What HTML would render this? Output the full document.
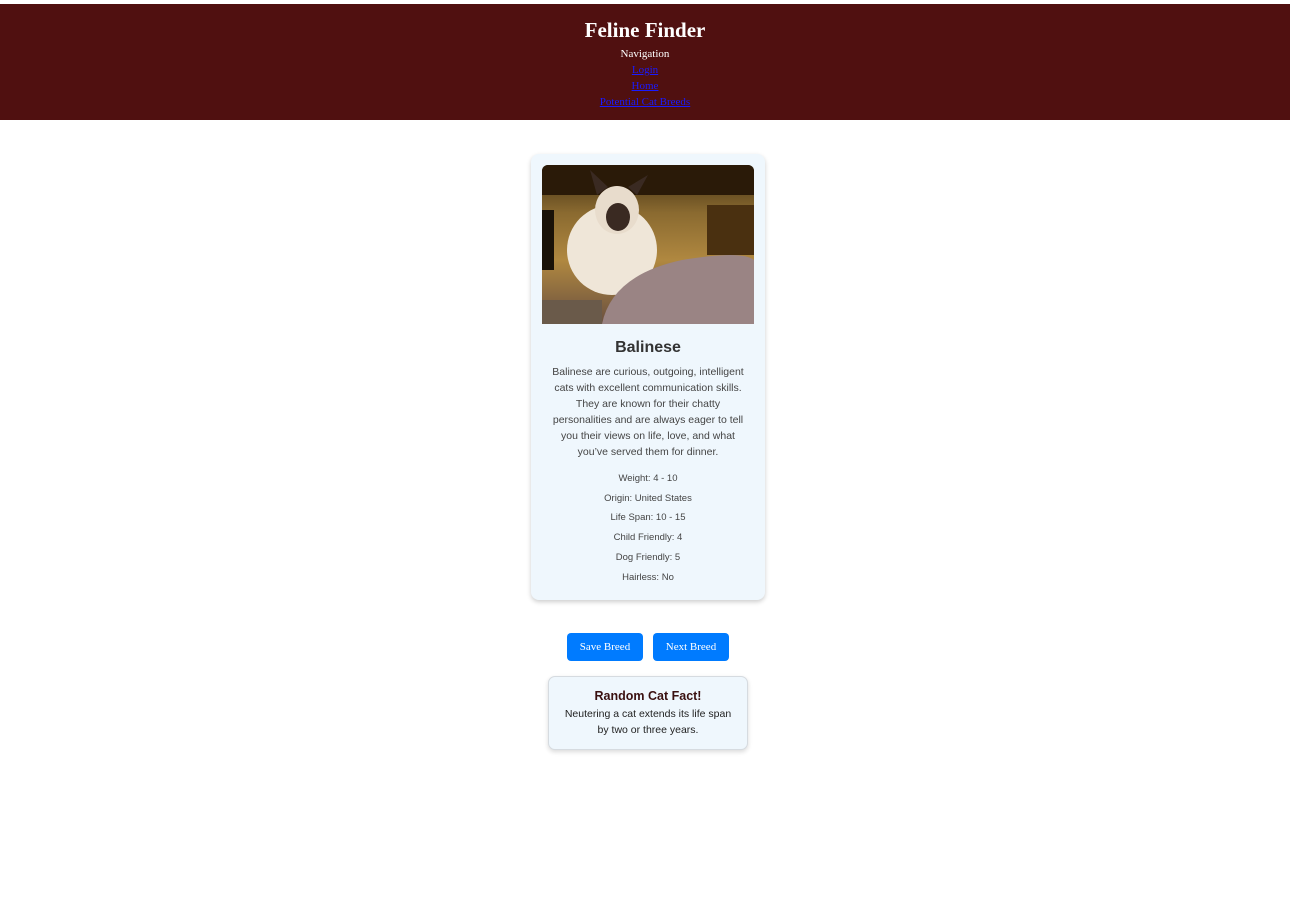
<!DOCTYPE html>
<html><head><style>
body{margin:0;background:#fff;font-family:"Liberation Sans",sans-serif;}
.hdr{position:absolute;top:4px;left:0;width:1290px;height:116px;background:#501010;text-align:center;font-family:"Liberation Serif",serif;color:#fff;}
.hdr h1{margin:0;position:absolute;top:14px;width:100%;font-size:21px;font-weight:bold;}
.hdr .nav{position:absolute;top:42px;width:100%;font-size:11px;line-height:16px;}
.hdr a{color:#1a1aff;text-decoration:underline;display:block;}
.card{position:absolute;left:531px;top:154px;width:234px;height:446px;background:#eff7fd;border-radius:8px;box-shadow:0 2px 5px rgba(0,0,0,.2);text-align:center;}
.img{position:absolute;left:11px;top:11px;width:212px;height:159px;border-radius:6px 6px 0 0;overflow:hidden;background:linear-gradient(180deg,#3a2a10 0%,#8a6a30 30%,#b08840 60%,#6a5040 100%);}
.card h2{position:absolute;top:185px;width:100%;margin:0;font-size:16px;color:#333;}
.desc{position:absolute;top:210px;left:16px;width:202px;font-size:10.5px;line-height:16px;color:#444;}
.stats{position:absolute;top:315px;width:100%;font-size:9.5px;color:#444;line-height:19.7px;}
.btn{position:absolute;top:633px;height:28px;width:76px;background:#007bff;color:#fff;border-radius:4px;font-family:"Liberation Serif",serif;font-size:11px;line-height:28px;text-align:center;}
.fact{position:absolute;left:548px;top:676px;width:198px;height:72px;background:#eff7fd;border:1px solid #d6dbe0;border-radius:7px;box-shadow:0 2px 5px rgba(0,0,0,.15);text-align:center;}
.fact b{display:block;margin-top:12px;font-size:12.5px;color:#3a1010;}
.fact p{margin:3px 0 0;font-size:10.5px;line-height:16px;color:#222;}
</style></head><body>
<div class="hdr"><h1>Feline Finder</h1><div class="nav">Navigation<a>Login</a><a>Home</a><a>Potential Cat Breeds</a></div></div>
<div class="card">
<div class="img"><svg width="212" height="159">
<rect x="0" y="0" width="212" height="30" fill="#2a1a08"/>
<rect x="0" y="45" width="12" height="60" fill="#1a1208"/>
<rect x="165" y="40" width="47" height="50" fill="#4a3010"/>
<ellipse cx="70" cy="85" rx="45" ry="45" fill="#efe6d8"/>
<ellipse cx="75" cy="45" rx="22" ry="24" fill="#e8dccc"/>
<ellipse cx="76" cy="52" rx="12" ry="14" fill="#3a2a22"/>
<polygon points="55,30 48,5 66,22" fill="#3a2a22"/><polygon points="95,30 106,10 86,22" fill="#3a2a22"/>
<path d="M60 159 Q70 110 140 95 Q200 85 212 95 V159 Z" fill="#9a8484"/>
<rect x="0" y="135" width="60" height="24" fill="#6a5a4a"/>
</svg></div>
<h2>Balinese</h2>
<div class="desc">Balinese are curious, outgoing, intelligent cats with excellent communication skills. They are known for their chatty personalities and are always eager to tell you their views on life, love, and what you’ve served them for dinner.</div>
<div class="stats">Weight: 4 - 10<br>Origin: United States<br>Life Span: 10 - 15<br>Child Friendly: 4<br>Dog Friendly: 5<br>Hairless: No</div>
</div>
<div class="btn" style="left:567px">Save Breed</div>
<div class="btn" style="left:653px">Next Breed</div>
<div class="fact"><b>Random Cat Fact!</b><p>Neutering a cat extends its life span<br>by two or three years.</p></div>
</body></html>
